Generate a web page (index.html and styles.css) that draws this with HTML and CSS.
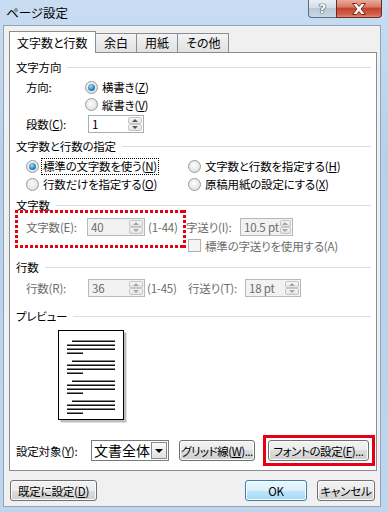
FILE: index.html
```html
<!DOCTYPE html>
<html lang="ja">
<head>
<meta charset="UTF-8" />
<title>ページ設定</title>
<link rel="stylesheet" href="styles.css">
</head>
<body>

<div class="window">
  <div class="titlebar">
    <span class="title">ページ設定</span>
    <div class="caption">
      <span class="cap-btn cap-help">?</span>
      <span class="cap-btn cap-close">
        <svg width="16" height="12" viewBox="0 0 16 12">
          <path d="M1.5 0.5h4l2.5 3 2.5-3h4l-4.5 5.5 4.5 5.5h-4l-2.5-3-2.5 3h-4l4.5-5.5z" fill="#fff" stroke="#7a2b22" stroke-width="1" stroke-linejoin="round"/>
        </svg>
      </span>
    </div>
  </div>

  <div class="client">
    <div class="tabs">
      <span class="tab active">文字数と行数</span>
      <span class="tab">余白</span>
      <span class="tab">用紙</span>
      <span class="tab">その他</span>
    </div>

    <div class="panel">
      <div class="group-title g-first">文字方向</div>
      <div class="row r-dir">
        <span class="label w-dir">方向:</span>
        <span class="opt"><span class="radio on"></span>横書き(<u>Z</u>)</span>
      </div>
      <div class="row r-dir2">
        <span class="opt"><span class="radio"></span>縦書き(<u>V</u>)</span>
      </div>
      <div class="row r-cols">
        <span class="label w-lbl">段数(<u>C</u>):</span>
        <span class="spin w-cols"><span class="spin-val">1</span><span class="spin-btns"><i class="up"></i><i class="down"></i></span></span>
      </div>

      <div class="group-title g-mode">文字数と行数の指定</div>
      <div class="opt-grid">
        <span class="opt"><span class="radio on"></span><span class="focus">標準の文字数を使う(<u>N</u>)</span></span>
        <span class="opt"><span class="radio"></span>文字数と行数を指定する(<u>H</u>)</span>
        <span class="opt"><span class="radio"></span>行数だけを指定する(<u>O</u>)</span>
        <span class="opt"><span class="radio"></span>原稿用紙の設定にする(<u>X</u>)</span>
      </div>

      <div class="group-title g-chars">文字数</div>
      <div class="row r-chars off">
        <span class="label w-chars">文字数(E):</span>
        <span class="spin off w-chars-in"><span class="spin-val">40</span><span class="spin-btns"><i class="up"></i><i class="down"></i></span></span>
        <span class="range">(1-44)</span>
        <span class="label w-pitch">字送り(I):</span>
        <span class="spin off w-pitch-in"><span class="spin-val">10.5 pt</span><span class="spin-btns"><i class="up"></i><i class="down"></i></span></span>
        <span class="dotted-mark"></span>
      </div>
      <div class="row r-check off">
        <span class="check"></span>標準の字送りを使用する(A)
      </div>

      <div class="group-title g-lines">行数</div>
      <div class="row r-lines off">
        <span class="label w-lbl">行数(R):</span>
        <span class="spin off w-lines-in"><span class="spin-val">36</span><span class="spin-btns"><i class="up"></i><i class="down"></i></span></span>
        <span class="range r2">(1-45)</span>
        <span class="label w-lpitch">行送り(T):</span>
        <span class="spin off w-lpitch-in"><span class="spin-val">18 pt</span><span class="spin-btns"><i class="up"></i><i class="down"></i></span></span>
      </div>

      <div class="group-title g-preview">プレビュー</div>
      <div class="preview">
        <svg width="70" height="94" viewBox="0 0 70 94">
          <rect x="3" y="3" width="66" height="90" fill="#000" opacity="0.12"/>
          <rect x="2" y="2" width="66" height="90" fill="#000" opacity="0.15"/>
          <rect x="0.5" y="0.5" width="65" height="89" fill="#fff" stroke="#000"/>
          <g fill="#111">
            <rect x="14" y="10.5" width="43" height="1.5"/><rect x="9" y="14.5" width="48" height="1.5"/><rect x="9" y="18.5" width="48" height="1.5"/><rect x="9" y="22.5" width="16" height="1.5"/>
            <rect x="14" y="30.5" width="43" height="1.5"/><rect x="9" y="34.5" width="48" height="1.5"/><rect x="9" y="38.5" width="48" height="1.5"/><rect x="9" y="42.5" width="16" height="1.5"/>
            <rect x="14" y="50.5" width="43" height="1.5"/><rect x="9" y="54.5" width="48" height="1.5"/><rect x="9" y="58.5" width="48" height="1.5"/><rect x="9" y="62.5" width="16" height="1.5"/>
            <rect x="14" y="70.5" width="43" height="1.5"/><rect x="9" y="74.5" width="48" height="1.5"/><rect x="9" y="78.5" width="48" height="1.5"/><rect x="9" y="82.5" width="16" height="1.5"/>
          </g>
        </svg>
      </div>

      <div class="target-row">
        <span class="label w-target">設定対象(<u>Y</u>):</span>
        <span class="select"><span class="select-val">文書全体</span><span class="select-arrow"></span></span>
        <span class="btn btn-grid">グリッド線(<u>W</u>)...</span>
        <span class="btn btn-font mark">フォントの設定(<u>F</u>)...</span>
      </div>
    </div>

    <div class="dlg-buttons">
      <span class="btn btn-default-set">既定に設定(<u>D</u>)</span>
      <span class="btn btn-ok">OK</span>
      <span class="btn btn-cancel">キャンセル</span>
    </div>
  </div>
</div>

</body>
</html>
```

FILE: styles.css
```css
* {
  box-sizing: border-box;
}
body {
  margin: 0;
  font-family: "Noto Sans CJK JP", "Noto Sans", sans-serif;
  font-feature-settings: "palt";
  font-size: 11.5px;
  letter-spacing: -0.2px;
  color: #000;
  background: #bcd4ec;
}
u {
  text-decoration-thickness: 1px;
  text-underline-offset: 1px;
}

/* window frame */
.window {
  width: 388px; height: 512px; overflow: hidden;
  background: linear-gradient(#c8ddf2, #b8d0ea 30%, #bed5ed);
}
.titlebar {
  height: 25px;
  display: flex; align-items: flex-start;
}
.title {
  padding: 4px 0 0 6px;
  line-height: 17px; font-size: 12.5px; letter-spacing: 0;
}
.caption {
  margin-left: auto; margin-right: 6px;
  display: flex;
}
.cap-btn {
  height: 18px;
  display: flex; align-items: center; justify-content: center;
  border: 1px solid #5d6e82; border-top: none;
}
.cap-help {
  width: 28px; border-right: none;
  border-radius: 0 0 0 4px;
  background: linear-gradient(#e7eef5, #d3dde8 45%, #b9c8d8 50%, #c9d6e3);
  color: #fff; font-family: "DejaVu Sans", sans-serif; font-weight: bold; font-size: 13px;
  text-shadow: 0 0 1px #2d3a48, 0 0 1px #2d3a48, 0 0 1px #2d3a48;
}
.cap-close {
  width: 46px;
  border-color: #6b2c23;
  border-radius: 0 0 4px 0;
  background: linear-gradient(#eaab9c, #d97a66 40%, #c6432d 50%, #d2604a 85%, #e28a74);
}

/* client area */
.client {
  margin: 0 7px 0 3px;
  border: 1px solid #8fa3b9;
  background: #f0f0f0;
  padding: 5px 3px 5px 5px;
}
.tabs {
  display: flex; align-items: flex-end;
  height: 22px; margin-bottom: -1px;
  position: relative; z-index: 1;
  font-size: 12px; letter-spacing: 0;
}
.tab {
  height: 20px; line-height: 18px;
  padding: 0 8px;
  border: 1px solid #898c95; border-left: none;
  background: linear-gradient(#f4f4f4, #eaeaea 50%, #e2e2e2);
}
.tab.active {
  height: 22px; padding: 2px 7px 0 7px;
  border-left: 1px solid #898c95; border-bottom: none;
  background: #fff;
  width: 87px;
}
.panel {
  height: 419px;
  border: 1px solid #898c95;
  background: #fff;
  padding: 0 5px 9px 6px;
  display: flex; flex-direction: column;
}

.group-title {
  display: flex; align-items: center;
  height: 16px; line-height: 16px;
}
.group-title::after {
  content: ""; flex: 1;
  height: 1px; margin: 1px 0 0 6px;
  background: #d5dfe5;
}
.g-first { margin-top: 6px; }
.g-mode { margin-top: 4px; }
.g-chars { margin-top: 4px; }
.g-lines { margin-top: 5px; }
.g-preview { margin-top: 10px; }

.row {
  display: flex; align-items: center;
  padding-left: 10px;
  white-space: nowrap;
}
.row.off, .off .label { color: #6d6d6d; }
.r-dir { height: 18px; margin-top: 3px; }
.r-dir2 { height: 17px; padding-left: 69px; }
.r-cols { height: 20px; margin-top: 1px; }
.r-chars { height: 20px; margin-top: 4px; position: relative; }
.r-check { height: 17px; padding-left: 172px; }
.r-lines { height: 20px; margin-top: 3px; }

.label { flex: none; }
.w-dir { width: 59px; }
.w-lbl { width: 62px; }
.w-chars { width: 61px; }
.w-pitch { width: 54px; }
.w-lpitch { width: 57px; }
.w-target { width: 75px; }

.opt {
  display: flex; align-items: center;
  white-space: nowrap;
}
.radio {
  width: 13px; height: 13px; flex: none;
  margin-right: 4px;
  border-radius: 50%;
  border: 1px solid #9a9a9a;
  background: radial-gradient(circle at 45% 40%, #fdfdfd, #e2e2e2 70%, #cfcfcf);
  display: flex; align-items: center; justify-content: center;
}
.radio.on::after {
  content: ""; width: 7px; height: 7px; border-radius: 50%;
  background: radial-gradient(circle at 40% 35%, #9fdcfa, #2c87c6 55%, #0f4a80);
}
.focus {
  border: 1px dotted #000;
  padding: 0 1px; line-height: 15px;
  margin-left: -2px;
}
.opt-grid {
  display: grid;
  grid-template-columns: 162px 1fr;
  grid-auto-rows: 18px;
  align-items: center;
  padding-left: 10px;
  margin-top: 3px;
}

.spin {
  display: flex; flex: none;
  height: 18px;
  border: 1px solid #abadb3;
  background: #fff;
}
.spin.off {
  border-color: #b8b8b8;
  background: #f2f2f2;
  color: #6d6d6d;
}
.spin-val {
  flex: 1; padding-left: 3px;
  line-height: 16px;
}
.spin-btns {
  width: 16px; padding: 1px;
  display: flex; flex-direction: column;
}
.spin-btns i {
  flex: 1;
  display: flex; align-items: center; justify-content: center;
  border: 1px solid #c6c6c6; border-radius: 2px;
  background: linear-gradient(#f7f7f7, #e3e3e3);
}
.up::after {
  content: "";
  border-left: 3px solid transparent; border-right: 3px solid transparent;
  border-bottom: 3px solid #555;
}
.down::after {
  content: "";
  border-left: 3px solid transparent; border-right: 3px solid transparent;
  border-top: 3px solid #555;
}
.off .up::after { border-bottom-color: #a6a6a6; }
.off .down::after { border-top-color: #a6a6a6; }
.w-cols { width: 56px; }
.w-chars-in { width: 58px; }
.w-pitch-in { width: 53px; }
.w-lines-in { width: 57px; }
.w-lpitch-in { width: 56px; }
.range { width: 38px; margin-left: 3px; }
.range.r2 { width: 41px; margin-left: 2px; }

.check {
  width: 13px; height: 13px; flex: none;
  margin-right: 4px;
  border: 1px solid #b1b1b1;
  background: #f4f4f4;
}

/* red dotted annotation */
.dotted-mark {
  position: absolute; left: -1px; top: -7px;
  width: 171px; height: 38px;
  background:
    repeating-linear-gradient(90deg, #e60012 0 3px, transparent 3px 5px) top left / 100% 3px no-repeat,
    repeating-linear-gradient(90deg, #e60012 0 3px, transparent 3px 5px) bottom left / 100% 3px no-repeat,
    repeating-linear-gradient(180deg, #e60012 0 3px, transparent 3px 5px) top left / 3px 100% no-repeat,
    repeating-linear-gradient(180deg, #e60012 0 3px, transparent 3px 5px) top right / 3px 100% no-repeat;
}

.preview {
  margin: 6px 0 0 42px;
  height: 94px;
}

.target-row {
  margin-top: auto;
  display: flex; align-items: center;
  height: 21px;
  white-space: nowrap;
}
.select {
  display: flex; width: 78px; height: 21px;
  border: 1px solid #7a7a7a;
  background: #fff;
}
.select-val {
  flex: 1; padding-left: 2px;
  font-size: 14px; line-height: 19px; letter-spacing: 0;
}
.select-arrow {
  width: 16px; margin: 1px;
  border: 1px solid #8a8a8a;
  background: linear-gradient(#fafafa, #e0e0e0);
  display: flex; align-items: center; justify-content: center;
}
.select-arrow::after {
  content: "";
  border-left: 4px solid transparent; border-right: 4px solid transparent;
  border-top: 4px solid #000;
}

.btn {
  display: flex; align-items: center; justify-content: center;
  height: 21px;
  border: 1px solid #707070; border-radius: 3px;
  background: linear-gradient(#f2f2f2, #ebebeb 50%, #dddddd 50%, #cfcfcf);
  box-shadow: inset 0 0 0 1px #fcfcfc;
  white-space: nowrap;
}
.btn-grid { width: 76px; margin-left: 10px; letter-spacing: -0.5px; }
.btn-font { width: 101px; margin-left: 13px; letter-spacing: -0.4px; }
.mark { position: relative; }
.mark::after {
  content: ""; position: absolute;
  left: -6px; right: -7px; top: -6px; bottom: -6px;
  border: 3px solid #e60012;
}

.dlg-buttons {
  display: flex;
  padding: 9px 2px 0 1px;
}
.btn-default-set { width: 87px; }
.btn-ok {
  width: 62px; margin-left: auto;
  border-color: #3c7fb1;
  background: linear-gradient(#eaf6fd, #d9f0fc 50%, #bee6fd 50%, #a7d9f5);
}
.btn-cancel { width: 58px; margin-left: 10px; }
```
